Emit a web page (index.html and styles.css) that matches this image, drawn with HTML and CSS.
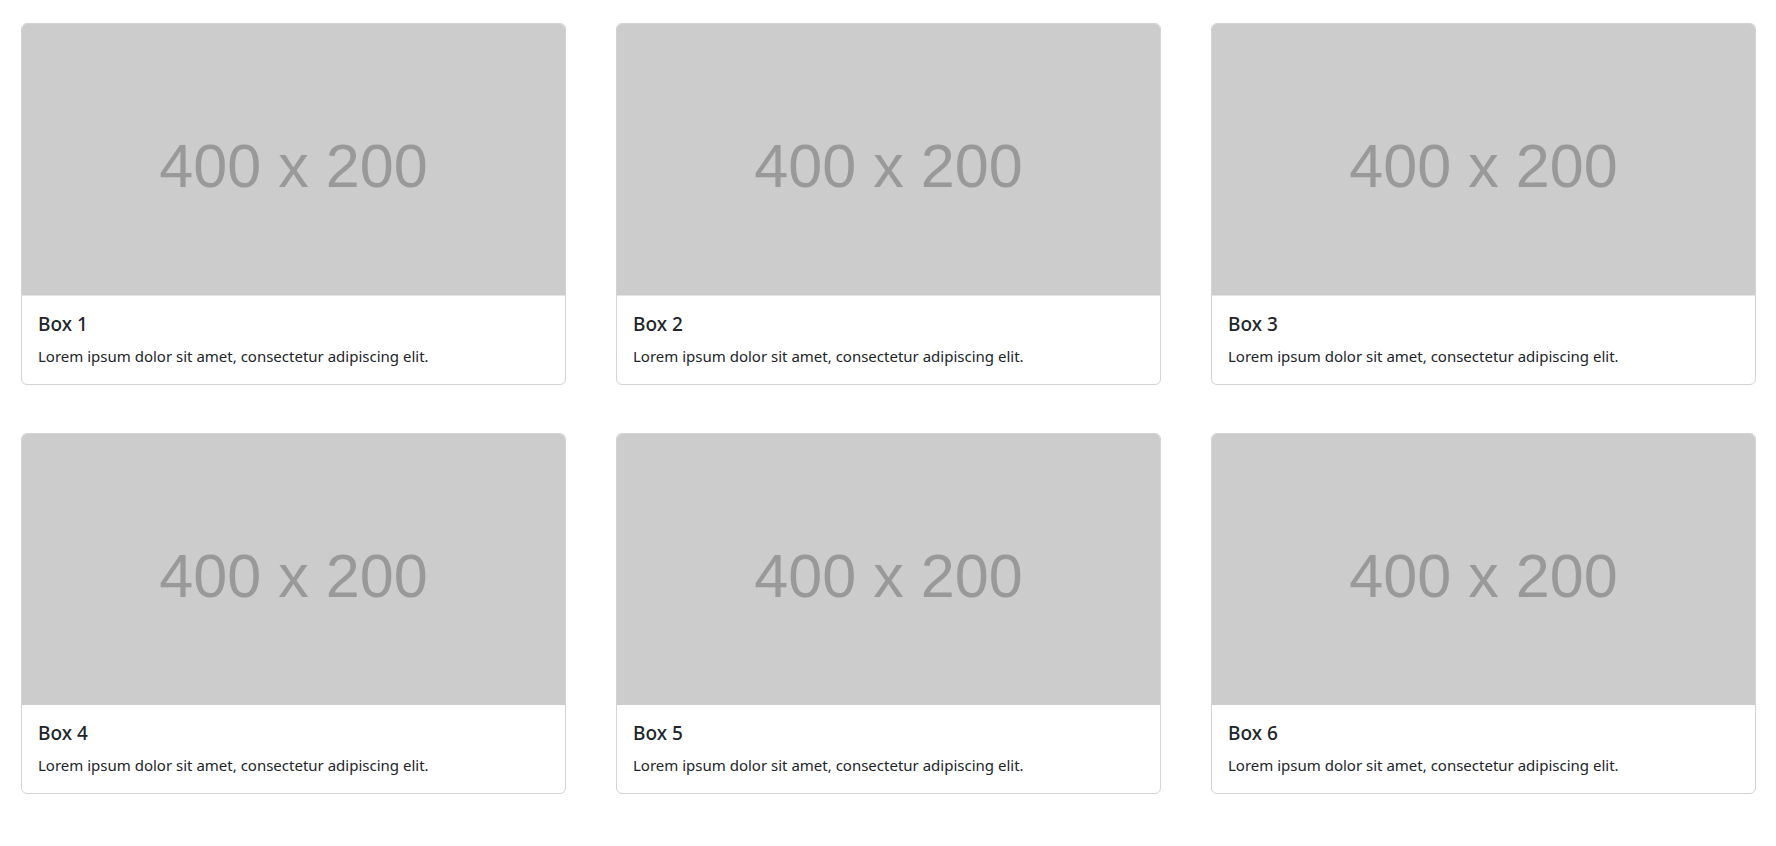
FILE: index.html
```html
<!DOCTYPE html>
<html lang="en">
<head>
<meta charset="utf-8">
<title>Boxes</title>
<link rel="stylesheet" href="styles.css">
</head>
<body>
<div class="wrap">
  <div class="grid">
    <div class="card">
      <svg class="ph" viewBox="0 0 400 200" preserveAspectRatio="none"><rect width="400" height="200" fill="#cccccc"/><text x="200" y="120" text-anchor="middle">400 x 200</text></svg>
      <div class="body"><h5 class="title">Box 1</h5><p class="text">Lorem ipsum dolor sit amet, consectetur adipiscing elit.</p></div>
    </div>
    <div class="card">
      <svg class="ph" viewBox="0 0 400 200" preserveAspectRatio="none"><rect width="400" height="200" fill="#cccccc"/><text x="200" y="120" text-anchor="middle">400 x 200</text></svg>
      <div class="body"><h5 class="title">Box 2</h5><p class="text">Lorem ipsum dolor sit amet, consectetur adipiscing elit.</p></div>
    </div>
    <div class="card">
      <svg class="ph" viewBox="0 0 400 200" preserveAspectRatio="none"><rect width="400" height="200" fill="#cccccc"/><text x="200" y="120" text-anchor="middle">400 x 200</text></svg>
      <div class="body"><h5 class="title">Box 3</h5><p class="text">Lorem ipsum dolor sit amet, consectetur adipiscing elit.</p></div>
    </div>
    <div class="card">
      <svg class="ph" viewBox="0 0 400 200" preserveAspectRatio="none"><rect width="400" height="200" fill="#cccccc"/><text x="200" y="120" text-anchor="middle">400 x 200</text></svg>
      <div class="body"><h5 class="title">Box 4</h5><p class="text">Lorem ipsum dolor sit amet, consectetur adipiscing elit.</p></div>
    </div>
    <div class="card">
      <svg class="ph" viewBox="0 0 400 200" preserveAspectRatio="none"><rect width="400" height="200" fill="#cccccc"/><text x="200" y="120" text-anchor="middle">400 x 200</text></svg>
      <div class="body"><h5 class="title">Box 5</h5><p class="text">Lorem ipsum dolor sit amet, consectetur adipiscing elit.</p></div>
    </div>
    <div class="card">
      <svg class="ph" viewBox="0 0 400 200" preserveAspectRatio="none"><rect width="400" height="200" fill="#cccccc"/><text x="200" y="120" text-anchor="middle">400 x 200</text></svg>
      <div class="body"><h5 class="title">Box 6</h5><p class="text">Lorem ipsum dolor sit amet, consectetur adipiscing elit.</p></div>
    </div>
  </div>
</div>
</body>
</html>
```
FILE: styles.css
```css
html, body {
  margin: 0;
  padding: 0;
  background: #fff;
}
body {
  font-family: "Noto Sans", "Open Sans", sans-serif;
  color: #212529;
  font-size: 16px;
  line-height: 1.5;
}
.wrap {
  padding: 23px 20px 0 21px;
}
.grid {
  display: grid;
  grid-template-columns: repeat(3, 1fr);
  column-gap: 50px;
  row-gap: 48px;
}
.card {
  border: 1px solid #d3d3d3;
  border-radius: 6px;
  overflow: hidden;
  background: #fff;
}
.ph {
  display: block;
  width: 100%;
  aspect-ratio: 2 / 1;
  height: auto;
}
.ph text {
  font-family: "Liberation Sans", Arial, sans-serif;
  font-size: 45px;
  fill: #999999;
}
.body {
  padding: 16px;
}
.title {
  margin: 0 0 8px;
  font-size: 19px;
  font-weight: 500;
  line-height: 24px;
}
.text {
  margin: 0;
  font-size: 15px;
  line-height: 24px;
}
```
